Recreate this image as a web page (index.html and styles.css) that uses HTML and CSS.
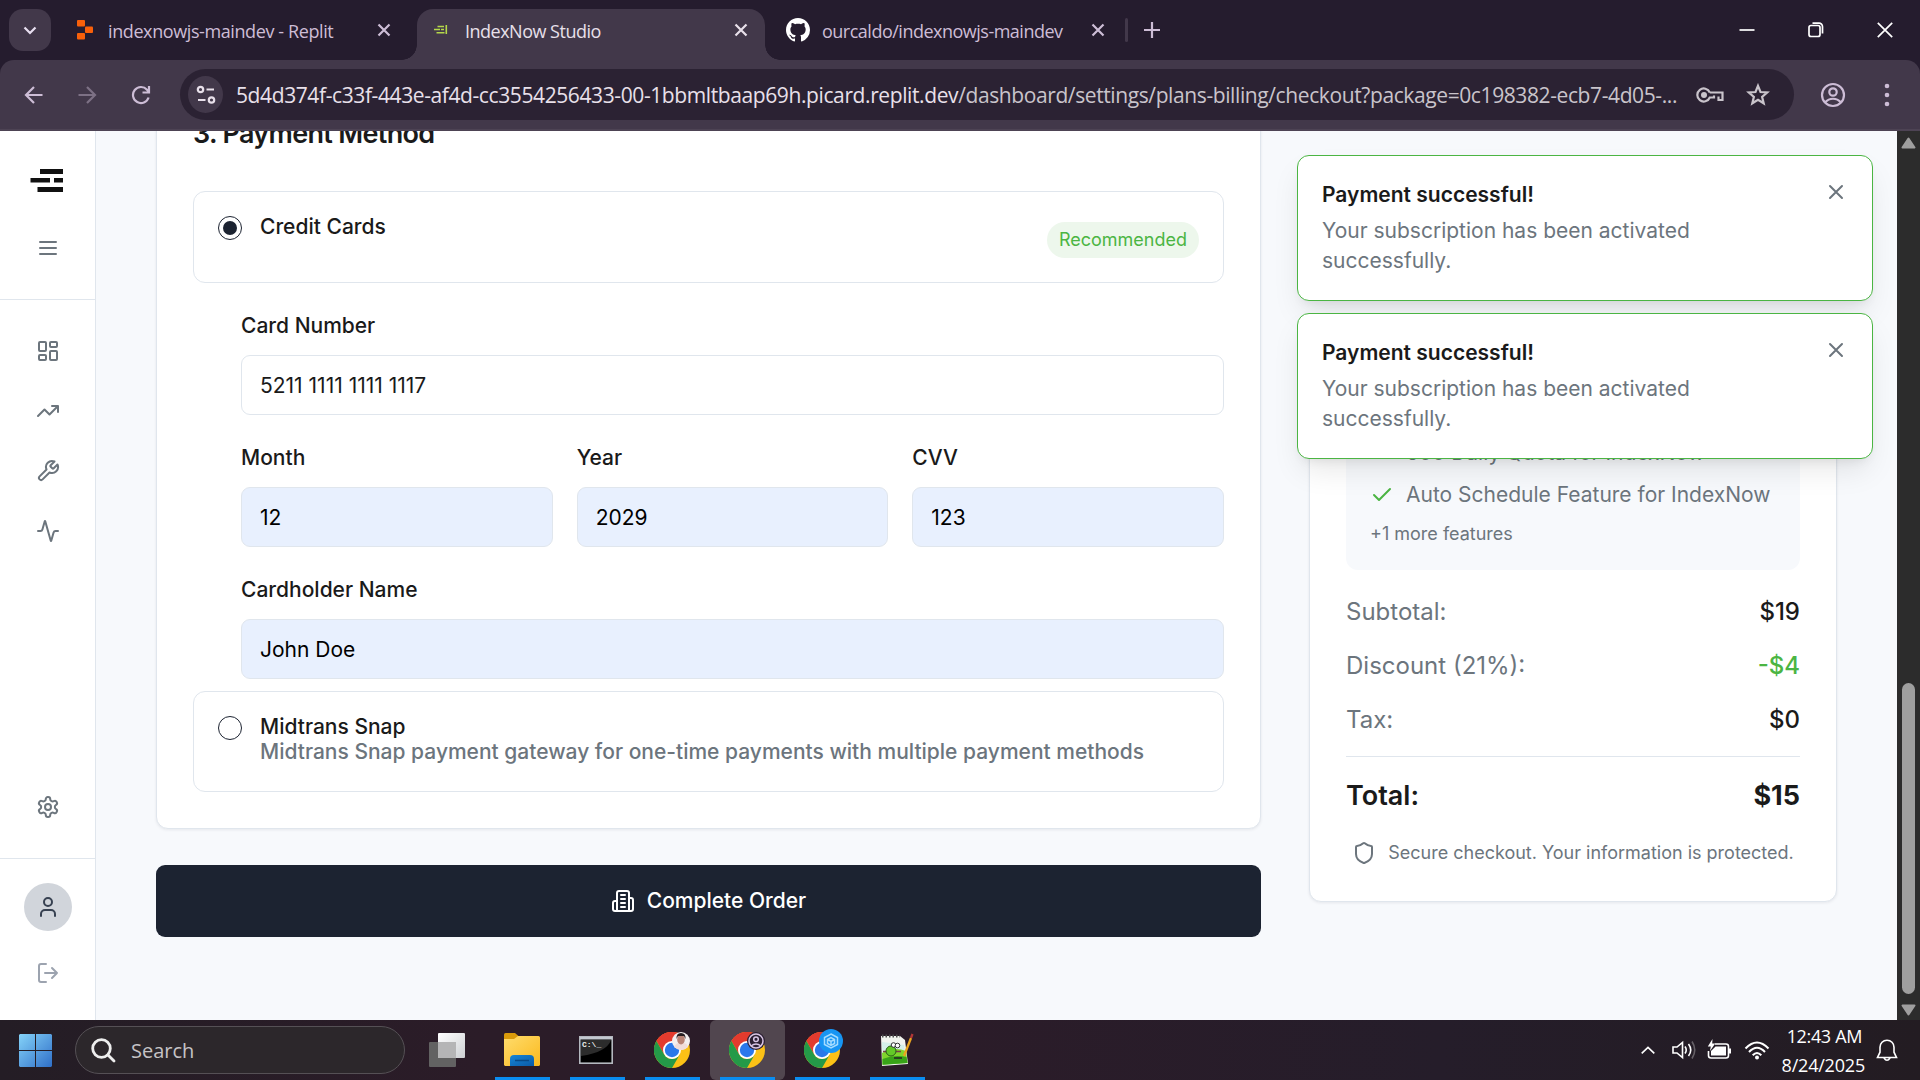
FILE: index.html
```html
<!DOCTYPE html>
<html lang="en">
<head>
<meta charset="utf-8">
<title>IndexNow Studio</title>
<link rel="stylesheet" href="styles.css">
</head>
<body>
<svg class="defs" width="0" height="0">
  <symbol id="x" viewBox="0 0 24 24"><path d="M18 6 6 18M6 6l12 12"/></symbol>
  <symbol id="check" viewBox="0 0 24 24"><path d="M20 6 9 17l-5-5"/></symbol>
  <symbol id="chrome" viewBox="0 0 36 36">
    <circle cx="18" cy="18" r="18" fill="#fbc116"/>
    <path d="M18 18 2.4 9A18 18 0 0 1 33.6 9Z" fill="#e33b2e"/>
    <path d="M18 9h15.6A18 18 0 0 0 2.4 9l7.8 13.5Z" fill="#e33b2e"/>
    <path d="M2.4 9A18 18 0 0 0 18 36l7.8-13.500A9 9 0 0 1 10.200 22.500Z" fill="#249a48"/>
    <circle cx="18" cy="18" r="9" fill="#fff"/><circle cx="18" cy="18" r="7.200" fill="#2b78ea"/>
  </symbol>
</svg>

<header class="tabstrip">
  <div class="tab-search"><svg width="14" height="14" viewBox="0 0 14 14"><path d="m1.500 4.500 5.500 5.500 5.500-5.500"/></svg></div>
  <div class="tab tab-first">
    <svg class="fav" width="18" height="20" viewBox="0 0 18 20"><g fill="#f9600a"><rect x="1" y="0" width="8" height="6.500" rx="1"/><rect x="9" y="6.500" width="8" height="6.500" rx="1"/><rect x="1" y="13" width="8" height="6.500" rx="1"/></g></svg>
    <span class="t1">indexnowjs-maindev - Replit</span>
    <svg class="close" width="14" height="14" viewBox="0 0 14 14"><path d="m1.500 1.500 11 11m0-11-11 11"/></svg>
  </div>
  <div class="tab tab-active">
    <svg class="fav" width="14" height="10" viewBox="0 0 14 10"><path d="M3.500 1.500H10M0 4.500h6M7 4.500h3M2.500 7.800h8M12.300 0v9" fill="none" stroke="#b5d84a" stroke-width="1.600"/></svg>
    <span class="t2">IndexNow Studio</span>
    <svg class="close" width="14" height="14" viewBox="0 0 14 14"><path d="m1.500 1.500 11 11m0-11-11 11"/></svg>
  </div>
  <div class="tab tab-last">
    <svg class="fav" width="24" height="24" viewBox="0 0 16 16"><path fill="#fff" d="M8 0C3.580 0 0 3.580 0 8c0 3.540 2.290 6.530 5.470 7.590.4.070.55-.17.55-.38 0-.19-.01-.82-.01-1.490-2.010.37-2.530-.49-2.690-.94-.09-.23-.48-.94-.82-1.130-.28-.15-.68-.52-.01-.53.63-.01 1.080.58 1.230.82.72 1.210 1.870.87 2.330.66.07-.52.28-.87.51-1.070-1.780-.2-3.640-.89-3.640-3.950 0-.87.31-1.590.82-2.150-.08-.2-.36-1.020.08-2.120 0 0 .67-.21 2.200.82.64-.18 1.320-.27 2-.27s1.360.09 2 .27c1.530-1.040 2.200-.82 2.200-.82.44 1.100.16 1.920.08 2.120.51.56.82 1.270.82 2.150 0 3.070-1.870 3.750-3.650 3.950.29.25.54.73.54 1.480 0 1.070-.01 1.930-.01 2.200 0 .21.15.46.55.38A8.010 8.010 0 0 0 16 8c0-4.420-3.580-8-8-8Z"/></svg>
    <span class="t3">ourcaldo/indexnowjs-maindev</span>
    <svg class="close" width="14" height="14" viewBox="0 0 14 14"><path d="m1.500 1.500 11 11m0-11-11 11"/></svg>
  </div>
  <i class="tab-sep"></i>
  <svg class="newtab" width="16" height="16" viewBox="0 0 16 16"><path d="M8 0v16M0 8h16"/></svg>
  <div class="winctl">
    <svg width="16" height="16" viewBox="0 0 16 16"><path d="M.5 8h15"/></svg>
    <svg width="16" height="16" viewBox="0 0 16 16"><rect x="1" y="3.500" width="11" height="11" rx="2"/><path d="M4.500 1.200H11a3.500 3.500 0 0 1 3.500 3.500v6.800"/></svg>
    <svg width="16" height="16" viewBox="0 0 16 16"><path d="m.8.8 14.400 14.400m0-14.400L.8 15.200"/></svg>
  </div>
</header>

<nav class="toolbar">
  <svg class="nav-i" width="20" height="20" viewBox="0 0 20 20"><path d="M18.500 10H2.500M10 2l-8 8 8 8"/></svg>
  <svg class="nav-i off" width="20" height="20" viewBox="0 0 20 20"><path d="M1.500 10h16M10 2l8 8-8 8"/></svg>
  <svg class="nav-i reload" width="20" height="20" viewBox="0 0 20 20"><path d="M17.600 12.500A8 8 0 1 1 16 4.700l2 2.300M18 1v6.500h-6.500"/></svg>
  <div class="omni">
    <span class="site"><svg width="20" height="20" viewBox="0 0 20 20"><circle cx="4.500" cy="4.500" r="2.700"/><path d="M10.500 4.500H18M2 15h7.500"/><circle cx="15.500" cy="15" r="2.700"/></svg></span>
    <span class="url"><b>5d4d374f-c33f-443e-af4d-cc3554256433-00-1bbmltbaap69h.picard.replit.dev</b><span>/dashboard/settings/plans-billing/checkout?package=0c198382-ecb7-4d05-...</span></span>
    <svg class="key" width="28" height="18" viewBox="0 0 28 18"><path d="M13.800 6.500A6.500 6.500 0 1 0 13.800 11.500H18V9.500M13.800 6.500H26.500V14h-4v-3.500"/><circle cx="8" cy="9" r="3" fill="#c9c4cb" stroke="none"/></svg>
    <svg class="star" width="24" height="24" viewBox="0 0 24 24"><path d="m12 2.800 2.500 6.200 6.700.5-5.100 4.300 1.600 6.500L12 16.800l-5.700 3.500 1.600-6.500-5.100-4.300L9.500 9Z"/></svg>
  </div>
  <svg class="profile" width="26" height="26" viewBox="0 0 26 26"><circle cx="13" cy="13" r="11"/><circle cx="13" cy="10" r="3.700"/><path d="M5 20.500c4.500-5 11.500-5 16 0"/></svg>
  <svg class="dots" width="6" height="24" viewBox="0 0 6 24"><circle cx="3" cy="3" r="2.300"/><circle cx="3" cy="12" r="2.300"/><circle cx="3" cy="21" r="2.300"/></svg>
</nav>

<div class="viewport">
  <aside class="sidebar">
    <div class="side-top">
      <svg class="logo" width="34" height="24" viewBox="0 0 34 24"><path d="M10 0h23v5H10zM.5 9H20v4.500H.5zM24 9h9v4.500h-9zM7.500 18H33v5H7.500z" fill="#111"/></svg>
      <svg class="ic" viewBox="0 0 24 24"><path d="M4 6h16M4 12h16M4 18h16"/></svg>
    </div>
    <div class="side-nav">
      <svg class="ic" viewBox="0 0 24 24"><rect width="7" height="9" x="3" y="3" rx="1"/><rect width="7" height="5" x="14" y="3" rx="1"/><rect width="7" height="9" x="14" y="12" rx="1"/><rect width="7" height="5" x="3" y="16" rx="1"/></svg>
      <svg class="ic" viewBox="0 0 24 24"><path d="m22 7-8.500 8.500-5-5L2 17M16 7h6v6"/></svg>
      <svg class="ic" viewBox="0 0 24 24"><path d="M14.700 6.300a1 1 0 0 0 0 1.400l1.600 1.600a1 1 0 0 0 1.400 0l3.770-3.770a6 6 0 0 1-7.940 7.940l-6.910 6.910a2.120 2.120 0 0 1-3-3l6.910-6.910a6 6 0 0 1 7.940-7.940l-3.760 3.760z"/></svg>
      <svg class="ic" viewBox="0 0 24 24"><path d="M22 12h-2.480a2 2 0 0 0-1.930 1.460l-2.350 8.360a.25.25 0 0 1-.48 0L9.240 2.180a.25.25 0 0 0-.48 0l-2.350 8.360A2 2 0 0 1 4.490 12H2"/></svg>
      <svg class="ic gear" viewBox="0 0 24 24"><path d="M12.220 2h-.44a2 2 0 0 0-2 2v.18a2 2 0 0 1-1 1.730l-.43.25a2 2 0 0 1-2 0l-.15-.08a2 2 0 0 0-2.730.73l-.22.38a2 2 0 0 0 .73 2.730l.15.1a2 2 0 0 1 1 1.720v.51a2 2 0 0 1-1 1.740l-.15.09a2 2 0 0 0-.73 2.730l.22.380a2 2 0 0 0 2.730.73l.15-.08a2 2 0 0 1 2 0l.43.25a2 2 0 0 1 1 1.730V20a2 2 0 0 0 2 2h.44a2 2 0 0 0 2-2v-.18a2 2 0 0 1 1-1.730l.43-.25a2 2 0 0 1 2 0l.15.08a2 2 0 0 0 2.730-.73l.22-.39a2 2 0 0 0-.73-2.730l-.15-.08a2 2 0 0 1-1-1.740v-.5a2 2 0 0 1 1-1.740l.15-.09a2 2 0 0 0 .73-2.730l-.22-.38a2 2 0 0 0-2.730-.73l-.15.08a2 2 0 0 1-2 0l-.43-.25a2 2 0 0 1-1-1.730V4a2 2 0 0 0-2-2z"/><circle cx="12" cy="12" r="3"/></svg>
    </div>
    <div class="side-user">
      <span class="avatar"><svg class="ic" viewBox="0 0 24 24"><path d="M19 21v-2a4 4 0 0 0-4-4H9a4 4 0 0 0-4 4v2"/><circle cx="12" cy="7" r="4"/></svg></span>
      <svg class="ic logout" viewBox="0 0 24 24"><path d="M10 3H5a2 2 0 0 0-2 2v14a2 2 0 0 0 2 2h5M16 17l5-5-5-5M21 12H9"/></svg>
    </div>
  </aside>

  <main class="content">
    <form class="checkout">
      <section class="card method">
        <h2>3. Payment Method</h2>
        <div class="option">
          <i class="radio on"></i><div class="option-text"><strong>Credit Cards</strong></div><span class="badge">Recommended</span>
        </div>
        <div class="fields">
          <label>Card Number</label>
          <div class="field">5211 1111 1111 1117</div>
          <div class="trio">
            <div><label>Month</label><div class="field fill">12</div></div>
            <div><label>Year</label><div class="field fill">2029</div></div>
            <div><label>CVV</label><div class="field fill">123</div></div>
          </div>
          <label>Cardholder Name</label>
          <div class="field fill">John Doe</div>
        </div>
        <div class="option second">
          <i class="radio"></i><div class="option-text"><strong>Midtrans Snap</strong><span>Midtrans Snap payment gateway for one-time payments with multiple payment methods</span></div>
        </div>
      </section>
      <div class="submit">
        <svg class="ic" viewBox="0 0 24 24"><path d="M6 22V4a2 2 0 0 1 2-2h8a2 2 0 0 1 2 2v18ZM6 12H4a2 2 0 0 0-2 2v6a2 2 0 0 0 2 2h2M18 9h2a2 2 0 0 1 2 2v9a2 2 0 0 1-2 2h-2M10 6h4M10 10h4M10 14h4M10 18h4"/></svg>
        <span>Complete Order</span>
      </div>
    </form>

    <aside class="card summary">
      <div class="features">
        <div class="feature"><svg class="ic"><use href="#check"/></svg>500 Daily Quota for IndexNow</div>
        <div class="feature"><svg class="ic"><use href="#check"/></svg>Auto Schedule Feature for IndexNow</div>
        <p>+1 more features</p>
      </div>
      <div class="line"><span>Subtotal:</span><b>$19</b></div>
      <div class="line"><span>Discount (21%):</span><b class="green">-$4</b></div>
      <div class="line"><span>Tax:</span><b>$0</b></div>
      <div class="total"><span>Total:</span><b>$15</b></div>
      <div class="secure"><svg class="ic" viewBox="0 0 24 24"><path d="M20 13c0 5-3.500 7.500-7.660 8.950a1 1 0 0 1-.67-.01C7.500 20.500 4 18 4 13V6a1 1 0 0 1 1-1c2 0 4.500-1.200 6.240-2.720a1.170 1.170 0 0 1 1.520 0C14.510 3.810 17 5 19 5a1 1 0 0 1 1 1z"/></svg>Secure checkout. Your information is protected.</div>
    </aside>
  </main>

  <div class="toasts">
    <div class="toast"><div><h3>Payment successful!</h3><p>Your subscription has been activated successfully.</p></div><svg class="ic"><use href="#x"/></svg></div>
    <div class="toast"><div><h3>Payment successful!</h3><p>Your subscription has been activated successfully.</p></div><svg class="ic"><use href="#x"/></svg></div>
  </div>

  <div class="scrollbar">
    <svg width="15" height="12" viewBox="0 0 15 12"><path d="M7.500 1.500 13.500 10.500h-12Z"/></svg>
    <i></i>
    <svg width="15" height="12" viewBox="0 0 15 12"><path d="M7.500 10.500 1.500 1.500h12Z"/></svg>
  </div>
</div>

<footer class="taskbar">
  <svg class="start" width="33" height="33" viewBox="0 0 33 33"><defs><linearGradient id="w" x1="0" y1="0" x2="33" y2="33" gradientUnits="userSpaceOnUse"><stop stop-color="#85d3f9"/><stop offset="1" stop-color="#2f6fc8"/></linearGradient></defs><path fill="url(#w)" d="M1 0h15v16H0V1zM17 0h15l1 1v15H17zM0 17h16v16H1l-1-1zM17 17h16v15l-1 1H17z"/></svg>
  <div class="search"><svg width="25" height="25" viewBox="0 0 25 25"><circle cx="10.500" cy="10.500" r="8.800"/><path d="m17 17 6 6"/></svg><span>Search</span></div>
  <div class="apps">
    <span class="app idle"><svg width="36" height="34" viewBox="0 0 36 34"><defs><linearGradient id="tv" x2="1" y2="1"><stop stop-color="#fff"/><stop offset="1" stop-color="#cdd0d3"/></linearGradient></defs><rect x="9" width="27" height="25" rx="1" fill="url(#tv)"/><rect y="9" width="27" height="25" rx="1" fill="#626262"/><path d="M9 9h18v16H9z" fill="#b5b5b6"/></svg></span>
    <span class="app"><svg width="36" height="34" viewBox="0 0 36 34"><defs><linearGradient id="fo" x2="1" y2="1"><stop stop-color="#ffdc6d"/><stop offset="1" stop-color="#fbb91d"/></linearGradient><linearGradient id="fb" x2="1" y2="1"><stop stop-color="#1686d6"/><stop offset="1" stop-color="#0b5aa6"/></linearGradient></defs><path d="M0 1.500Q0 0 1.500 0H11l4 3.500V8H0Z" fill="#d99a0a"/><path d="M0 6h10l4-3h20.500Q36 3 36 4.500V32l-1 1H1l-1-1Z" fill="url(#fo)"/><path d="M6 33v-7q0-4 4-4h16q4 0 4 4v7Z" fill="url(#fb)"/><path d="M11 27.500h14" stroke="#084a87" stroke-width="1.500"/></svg></span>
    <span class="app term"><svg width="34" height="28" viewBox="0 0 34 28"><rect x=".8" y=".8" width="32.400" height="26.400" fill="#000" stroke="#b4b8bf" stroke-width="1.600"/><path d="M1 1h32v2.500H1z" fill="#c3c8d0"/><path d="M2 4h30Q28 16 2 20Z" fill="#2c2c2c"/><text x="3" y="11" font-family="Liberation Mono" font-size="8" font-weight="bold" fill="#eee">C:\_</text></svg></span>
    <span class="app"><svg width="36" height="36"><use href="#chrome"/><circle cx="27" cy="9" r="9" fill="#f3efef"/><path d="M20 15q2-4 5-4h4q4 0 5 4-6 6-14 0Z" fill="#f0dcd8"/><ellipse cx="27" cy="7.500" rx="3.800" ry="5" fill="#b98374"/><path d="M22.500 7q-.5-6 4.500-6t4.500 6l-1.500-3h-6Z" fill="#251d20"/></svg></span>
    <span class="app current"><svg width="36" height="36"><use href="#chrome"/><circle cx="27" cy="9" r="9" fill="#2c2133"/><g fill="none" stroke="#d8c6e4" stroke-width="1.500"><circle cx="27" cy="9" r="7"/><circle cx="27" cy="7.300" r="2.300"/><path d="M22 14q5-4 10 0"/></g></svg></span>
    <span class="app"><svg class="over" width="36" height="36"><use href="#chrome"/><circle cx="27" cy="9" r="12" fill="#1795f3"/><path d="m27 2 6.500 3.500v7L27 16l-6.500-3.500v-7ZM23.500 7.500l3.500-2 3.500 2v4L27 13.500l-3.500-2ZM27 9.500V13M23.500 7.500l3.500 2 3.500-2" fill="none" stroke="#a5dcff" stroke-width="1.500"/></svg></span>
    <span class="app"><svg width="34" height="34" viewBox="0 0 34 34"><path d="M1 3h19l5 4 3 24-26 2Z" fill="#f2f4ef"/><path d="M2 9q10 1 22 3l3 18-24 2Z" fill="#d5efe9"/><path d="M2 20q12-7 24-2l1.500 12-25 1.700Z" fill="#7fd42c"/><path d="M2.500 26q12-5 24-2l1 6-25 1.700Z" fill="#38a318"/><path d="M2 3h18" stroke="#4d4d4d" stroke-width="3" stroke-dasharray="1.500 2"/><path d="M3 18.500h18" stroke="#7a414a" stroke-width="1.500"/><circle cx="11" cy="18" r="5" fill="#63c928" stroke="#295c18"/><g fill="#fff" stroke="#333"><circle cx="13.500" cy="12" r="2.300"/><circle cx="17.500" cy="12.500" r="2.300"/></g><path d="M14 25h8" stroke="#222" stroke-width="1.500"/><path d="m24 23 7-18" stroke="#eba41d" stroke-width="2.300"/><path d="m31 5 1.500-4" stroke="#b23636" stroke-width="2.300"/></svg></span>
  </div>
  <div class="tray">
    <svg class="chev" width="14" height="8" viewBox="0 0 14 8"><path d="m.7 7.300 6.300-6 6.300 6"/></svg>
    <svg width="24" height="20" viewBox="0 0 24 20"><path d="M1 7v6h4l5.500 4.500v-15L5 7ZM13 6.500q2.500 3.500 0 7M16.500 4q4.500 6 0 12"/><path d="M20 1.500q5.500 8.500 0 17" opacity=".3"/></svg>
    <svg width="26" height="22" viewBox="0 0 26 22"><path d="M8 5h11q2.500 0 2.500 2.500v9q0 2.500-2.500 2.500H4q-2.500 0-2.500-2.500V12"/><path d="M8.500 7.500H19v9H4V12ZM22 9.500h2v5h-2ZM5.500 0 .8 7.500h3L3 12l5.200-7.500h-3Z" fill="#fff" stroke="none"/></svg>
    <svg width="26" height="19" viewBox="0 0 26 19"><path d="M1.500 7.500q11.500-12 23 0M5 11q8-8.500 16 0M8.700 14.200q4.300-4.500 8.600 0" stroke-width="2"/><circle cx="13" cy="16.500" r="2" fill="#fff" stroke="none"/></svg>
    <div class="clock"><span class="time">12:43 AM</span><span>8/24/2025</span></div>
    <svg class="bell" width="22" height="23" viewBox="0 0 22 23"><path d="M11 1.200c-4 0-7 3-7 7v5L1.500 18.500h19L18 13.200v-5c0-4-3-7-7-7ZM8 19q3 4.500 6 0"/></svg>
  </div>
</footer>
</body>
</html>
```
FILE: styles.css
```css
* { box-sizing: border-box; margin: 0; padding: 0; }
body { width: 1920px; height: 1080px; overflow: hidden; display: grid; grid-template-rows: 60px 71px 889px 60px; grid-template-columns: 1920px; background: #251c2e; font-family: Inter, "Liberation Sans", sans-serif; color: #1a1a1a; }
svg { display: block; flex: none; }
.defs { position: absolute; }
.ic { width: 24px; height: 24px; fill: none; stroke: currentColor; stroke-width: 2; stroke-linecap: round; stroke-linejoin: round; }

/* Browser tabs */
.tabstrip, .toolbar, .taskbar { font-family: "Open Sans", "Noto Sans", sans-serif; }
.tabstrip { display: flex; align-items: center; background: #251c2e; color: #cdbdd6; font-size: 18px; white-space: nowrap; }
.tabstrip svg { fill: none; stroke: currentColor; stroke-width: 2.200; }
.tabstrip .fav { stroke: none; }
.tab-search { width: 42px; height: 42px; margin-left: 9px; border-radius: 14px; background: #42384a; color: #e8dff0; display: grid; place-items: center; }
.tab { display: flex; align-items: center; height: 60px; }
.tab span { padding-top: 2px; }
.tab .close { margin-left: auto; }
.tab-first { width: 350px; padding-left: 25px; padding-right: 10px; }
.tab-first .fav { margin-right: 14px; }
.tab-active { position: relative; width: 348px; height: 51px; align-self: flex-end; margin-left: 16px; padding: 0 17px 9px; border-radius: 16px 16px 0 0; background: #42384a; color: #e8e0ea; }
.tab-active::before, .tab-active::after { content: ""; position: absolute; bottom: 0; width: 15px; height: 15px; }
.tab-active::before { left: -15px; background: radial-gradient(circle at 0 0, transparent 14.500px, #42384a 15px); }
.tab-active::after { right: -15px; background: radial-gradient(circle at 100% 0, transparent 14.500px, #42384a 15px); }
.tab-active .fav { margin-right: 17px; }
.tab-last { width: 340px; padding-left: 21px; padding-right: 0; }
.tab-last .fav { margin-right: 12px; }
.tab-sep { width: 3px; height: 24px; margin-left: 20px; border-radius: 2px; background: #42384a; }
.newtab { margin-left: 16px; }
.winctl { margin-left: auto; margin-right: 27px; display: flex; gap: 53px; color: #fff; }
.winctl svg { stroke-width: 1.700; }
.t1 { letter-spacing: -.4px; }
.t2 { letter-spacing: -.5px; }
.t3 { letter-spacing: -.5px; }

/* Address bar */
.toolbar { display: flex; align-items: center; background: #42384a; border-bottom: 2px solid #4d4354; border-radius: 14px 14px 0 0; padding: 0 30px 0 24px; color: #cdbdd6; }
.toolbar svg { fill: none; stroke: currentColor; stroke-width: 2.200; }
.nav-i { margin-right: 33px; }
.nav-i.off { color: #7d7185; margin-right: 34px; }
.nav-i.reload { margin-right: 29px; }
.omni { flex: none; width: 1614px; height: 51px; border-radius: 26px; background: #2b2233; display: flex; align-items: center; padding-left: 8px; color: #c9c4cb; }
.site { width: 35px; height: 37px; border-radius: 50%; background: #42384a; color: #e8e0ea; display: grid; place-items: center; margin-right: 13px; }
.url { width: 1460px; font-size: 21px; white-space: nowrap; letter-spacing: -.396px; }
.url b { font-weight: 400; color: #e8e0ea; }
.star { margin-left: 22px; }
.profile { margin-left: 26px; }
.dots { margin-left: 38px; }
.toolbar .dots { fill: #cdbdd6; stroke: none; }

/* Page */
.viewport { position: relative; display: flex; overflow: hidden; background: #f7f9fc; }
.sidebar { width: 96px; border-right: 1px solid #e0e6ed; background: #fff; color: #6c757d; display: flex; flex-direction: column; }
.side-top { height: 169px; border-bottom: 1px solid #e0e6ed; display: flex; flex-direction: column; align-items: center; padding-top: 38px; }
.logo { margin-right: 2px; }
.side-top .ic { margin-top: 43px; }
.side-nav { height: 559px; border-bottom: 1px solid #e0e6ed; padding: 39px 0; display: flex; flex-direction: column; align-items: center; gap: 36px; }
.gear { margin-top: auto; }
.side-user { display: flex; flex-direction: column; align-items: center; padding-top: 24px; gap: 30px; }
.avatar { width: 48px; height: 48px; border-radius: 50%; background: #d1d5db; color: #374151; display: grid; place-items: center; }
.logout { color: #9ca3af; }
.content { flex: 1; display: flex; align-items: flex-end; gap: 48px; padding-left: 60px; height: 889px; }
.card { background: #fff; border: 1px solid #e0e6ed; border-radius: 12px; box-shadow: 0 1px 3px rgba(20, 30, 50, .08); padding: 36px; }
.checkout { width: 1105px; padding-bottom: 83px; }
h2 { font-size: 27px; line-height: 36px; font-weight: 600; letter-spacing: -.68px; margin-bottom: 39px; }
.option { display: flex; align-items: flex-start; height: 92px; border: 1px solid #e0e6ed; border-radius: 12px; padding: 24px; font-size: 21px; }
.option strong { display: block; font-weight: 500; }
.option-text { line-height: 25px; padding-left: 18px; margin-top: -2px; }
.option-text span { display: block; font-weight: 500; color: #6c757d; }
.option.second { height: 101px; margin-top: 12px; }
.radio { width: 24px; height: 24px; border: 1.500px solid #1c2331; border-radius: 50%; display: grid; place-items: center; flex: none; }
.radio.on::after { content: ""; width: 14px; height: 14px; border-radius: 50%; background: #1c2331; }
.badge { margin: 6px 0 0 auto; height: 36px; padding: 0 12px; border-radius: 18px; background: #edf7ec; color: #4bb543; font-size: 18px; line-height: 36px; }
.fields { padding: 28px 0 0 48px; }
label { display: block; font-size: 21px; font-weight: 500; line-height: 30px; height: 44px; }
.field { height: 60px; border: 1px solid #e0e6ed; border-radius: 9px; padding: 0 18px; font-size: 21px; line-height: 59px; background: #fff; }
.field.fill { background: #e8f0fe; color: #000; }
.trio { display: grid; grid-template-columns: repeat(3, 1fr); gap: 24px; padding: 28px 0; }
.submit { margin-top: 36px; height: 72px; border-radius: 9px; background: #1c2331; color: #fff; font-size: 21px; font-weight: 500; display: flex; align-items: center; justify-content: center; gap: 12px; }
.submit span { padding-bottom: 2px; }
.summary { width: 528px; margin-bottom: 118px; }
.features { background: #f7f9fc; border-radius: 12px; padding: 70px 24px 24px; margin-bottom: 24px; font-size: 21px; color: #6c757d; }
.feature { display: flex; align-items: center; gap: 12px; line-height: 30px; margin-bottom: 12px; }
.feature .ic { color: #4bb543; }
.features p { font-size: 18px; line-height: 24px; }
.line { display: flex; justify-content: space-between; font-size: 24px; line-height: 36px; margin-bottom: 18px; color: #6c757d; }
.line b { font-weight: 500; color: #1a1a1a; }
.line b.green { color: #4bb543; }
.total { display: flex; justify-content: space-between; border-top: 1px solid #e0e6ed; padding-top: 18px; font-size: 27px; line-height: 42px; font-weight: 600; }
.total b { font-weight: 700; }
.secure { display: flex; align-items: center; justify-content: center; gap: 12px; margin-top: 24px; font-size: 18px; line-height: 24px; color: #6c757d; white-space: nowrap; }
.toasts { position: absolute; left: 1297px; top: 24px; width: 576px; display: grid; gap: 12px; }
.toast { height: 146px; border: 1.500px solid #4bb543; border-radius: 12px; background: #fff; box-shadow: 0 15px 30px -5px rgba(0, 0, 0, .1), 0 6px 12px -6px rgba(0, 0, 0, .1); padding: 22px 24px; display: flex; justify-content: space-between; color: #6c757d; }
.toast > div { width: 440px; }
.toast h3 { font-size: 21px; font-weight: 600; line-height: 33px; color: #1a1a1a; margin-bottom: 5px; }
.toast p { font-size: 21px; line-height: 30px; }
.toast .ic { margin-top: 2px; }
.scrollbar { position: absolute; top: 0; right: 0; width: 23px; height: 889px; background: #2c2c2c; display: flex; flex-direction: column; align-items: center; padding: 6px 0 4px; }
.scrollbar svg { fill: #9f9f9f; stroke: #9f9f9f; stroke-linejoin: round; stroke-width: 2; }
.scrollbar i { width: 13px; height: 311px; margin: 534px 0 auto; border-radius: 7px; background: #9f9f9f; }

/* Taskbar */
.taskbar { display: flex; align-items: center; background: linear-gradient(90deg, #241d25, #2b1c28 25%, #2b1c29 50%, #251d2a 75%, #231c22); color: #fff; }
.start { margin-left: 19px; }
.search { margin-left: 23px; width: 330px; height: 48px; border: 1px solid #555055; border-radius: 24px; background: #2c272b; display: flex; align-items: center; padding-left: 15px; gap: 15px; font-size: 20px; color: #c6c3c6; }
.search span { padding-top: 1px; }
.search svg { fill: none; stroke: #eee; stroke-width: 2.800; stroke-linecap: round; }
.apps { display: flex; height: 60px; margin-left: 5px; }
.app { width: 75px; height: 60px; padding-right: 2px; display: grid; place-items: center; border-radius: 6px; background: linear-gradient(#0a8df0, #0a8df0) center bottom / 55px 3px no-repeat; }
.app.idle { background: none; }
.app.term { padding-right: 3px; }
.app.current { background-color: #51464f; }
.over { overflow: visible; }
.tray { margin-left: auto; display: flex; align-items: center; padding-right: 22px; }
.tray svg { fill: none; stroke: #fff; stroke-width: 1.600; margin-right: 11px; }
.tray .chev { margin-right: 17px; }
.clock { width: 84px; display: flex; flex-direction: column; align-items: flex-end; padding-top: 2px; font-size: 18px; line-height: 29px; letter-spacing: -.2px; white-space: nowrap; margin-right: 11px; }
.time { padding-right: 3px; letter-spacing: -.35px; }
.tray .bell { margin-right: 0; }
```
